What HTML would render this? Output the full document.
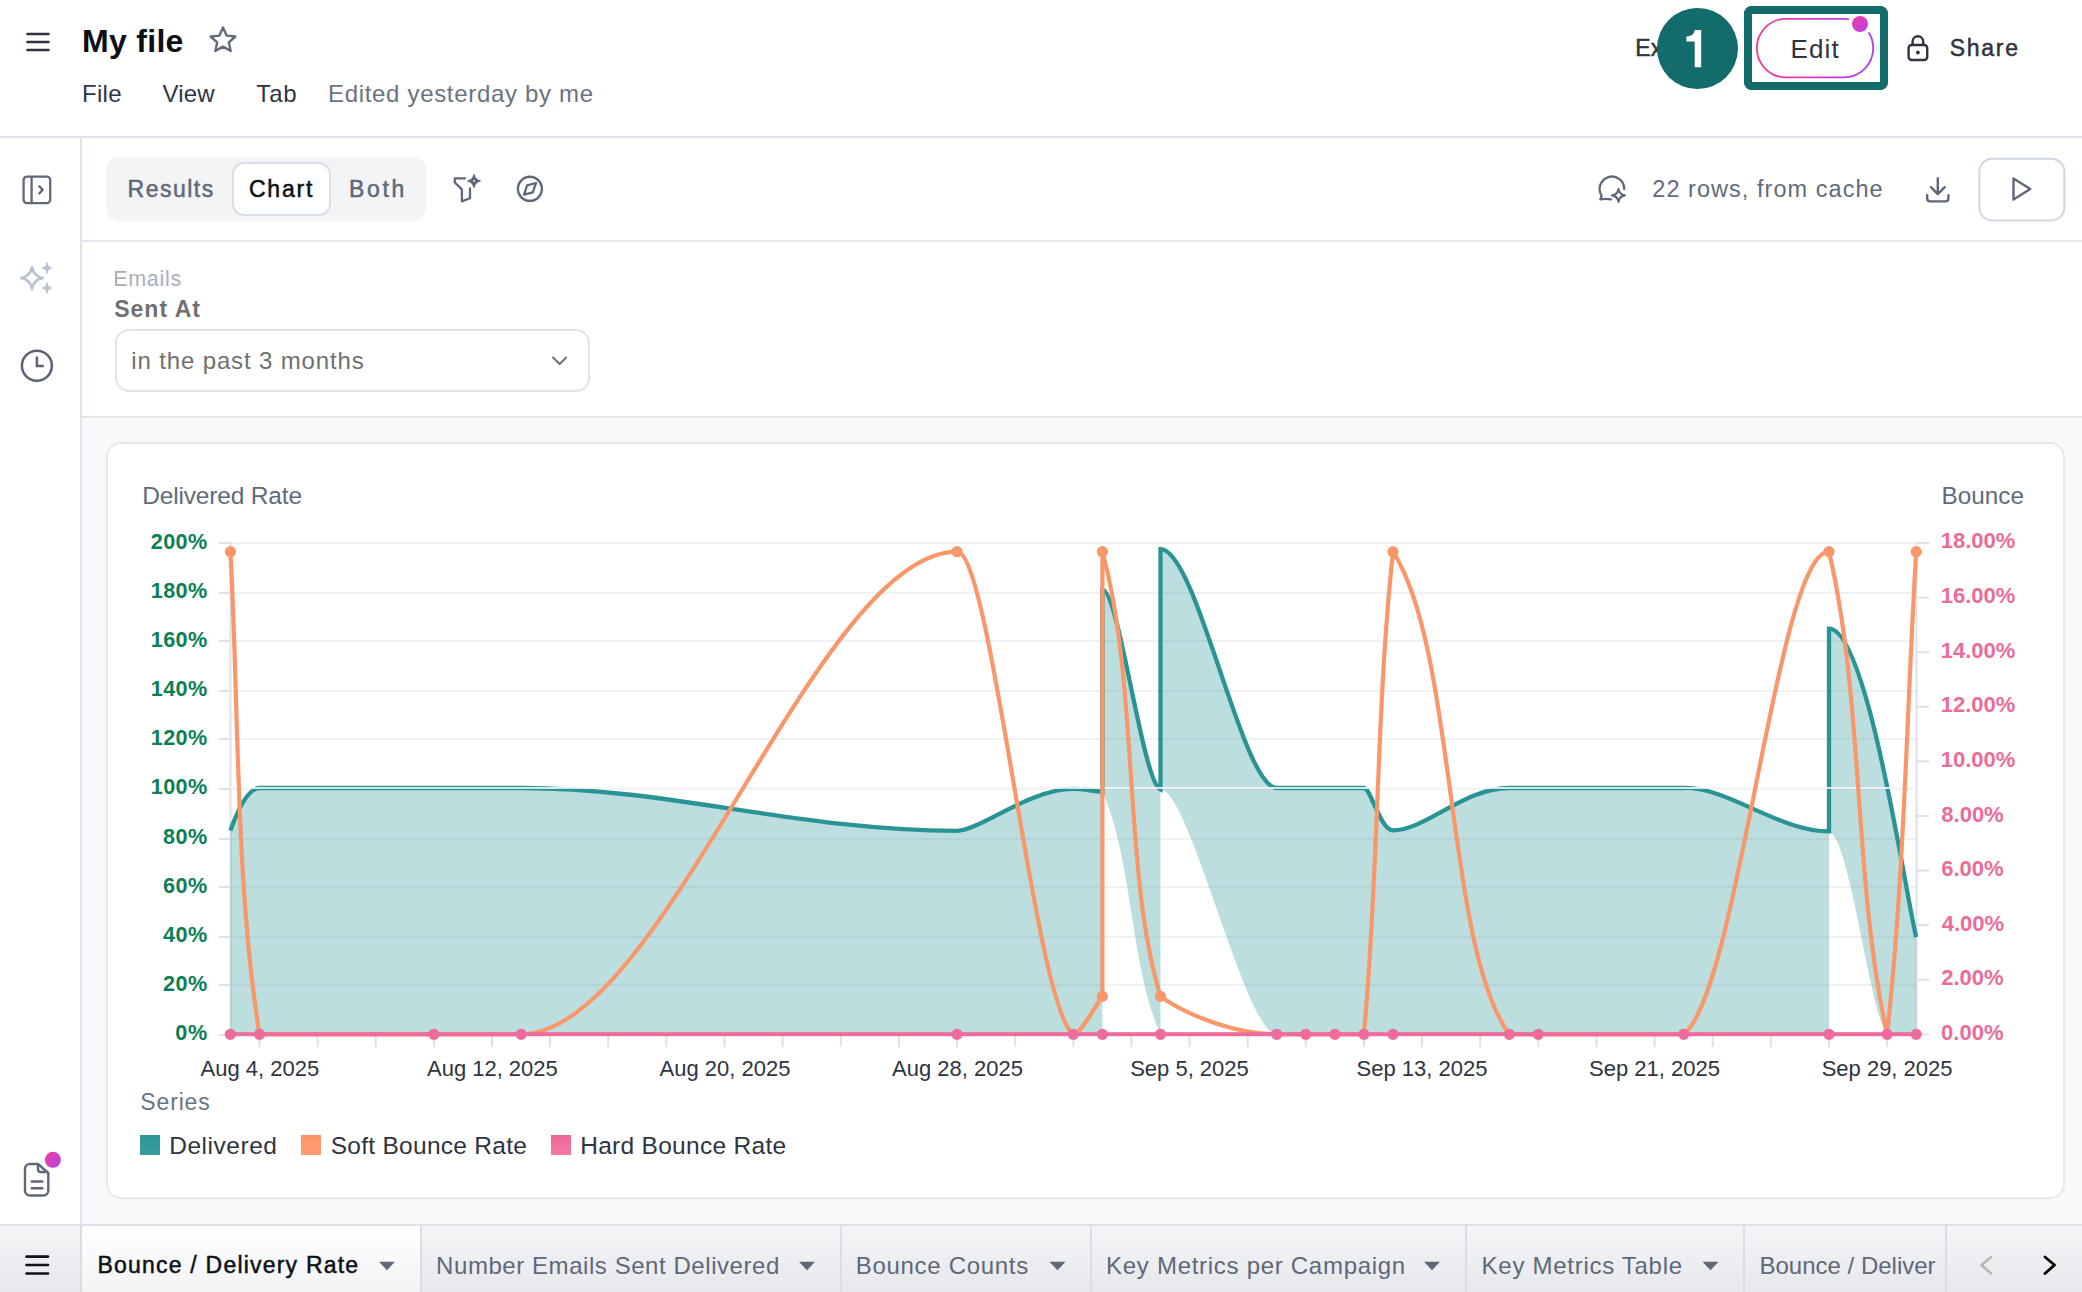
<!DOCTYPE html>
<html><head><meta charset="utf-8"><style>
html,body{margin:0;padding:0;width:2082px;height:1292px;overflow:hidden;background:#fff;}
body{position:relative;font-family:"Liberation Sans",sans-serif;}
.t{position:absolute;white-space:pre;line-height:1;}
.box{position:absolute;box-sizing:border-box;}
svg.box{overflow:visible}
</style></head><body>
<div class="box" style="left:0;top:136px;width:2082px;height:2px;background:#E0E4EB"></div>
<svg class="box" style="left:0;top:0" width="260" height="136"><g stroke="#2C3341" stroke-width="2.6" stroke-linecap="round"><line x1="27.5" y1="34" x2="48.5" y2="34"/><line x1="27.5" y1="42" x2="48.5" y2="42"/><line x1="27.5" y1="50" x2="48.5" y2="50"/></g><path d="M223,27.5 L226.6,35.6 L235.4,36.5 L228.8,42.4 L230.7,51 L223,46.6 L215.3,51 L217.2,42.4 L210.6,36.5 L219.4,35.6 Z" fill="none" stroke="#5F6B7D" stroke-width="2.4" stroke-linejoin="round"/></svg>
<div class="t" style="left:82.1px;top:24.9px;font-size:32.00px;color:#0B0E13;font-weight:700;letter-spacing:0.28px;">My file</div>
<div class="t" style="left:81.9px;top:82.4px;font-size:24.00px;color:#2E3646;letter-spacing:0.35px;">File</div>
<div class="t" style="left:162.4px;top:82.4px;font-size:24.00px;color:#2E3646;letter-spacing:0.24px;">View</div>
<div class="t" style="left:256.3px;top:82.4px;font-size:24.00px;color:#2E3646;letter-spacing:0.85px;">Tab</div>
<div class="t" style="left:328.0px;top:82.4px;font-size:24.00px;color:#6B7380;letter-spacing:0.68px;">Edited yesterday by me</div>
<div class="t" style="left:1635.3px;top:37.0px;font-size:23.00px;color:#2E3440;-webkit-text-stroke:0.50px #2E3440;">Ex</div>
<div class="box" style="left:1656.7px;top:7.6px;width:81px;height:81px;border-radius:50%;background:#136B6B"></div>
<svg class="box" style="left:1680px;top:26px" width="30" height="46"><path d="M21.2,4 V41.2 H14.7 V15.4 H6.4 V10.4 Q11.6,10.4 13.4,7.6 Q14.3,6 14.8,4 Z" fill="#fff"/></svg>
<div class="box" style="left:1744px;top:6px;width:144px;height:84px;border:8px solid #136B6B;border-radius:8px;background:#fff"></div>
<svg class="box" style="left:1744px;top:6px" width="144" height="84"><defs><linearGradient id="pg" x1="0" y1="0" x2="1" y2="0"><stop offset="0" stop-color="#F23B97"/><stop offset="1" stop-color="#B33CF2"/></linearGradient><linearGradient id="dg" x1="0" y1="0" x2="1" y2="1"><stop offset="0" stop-color="#F23F9B"/><stop offset="1" stop-color="#B441EE"/></linearGradient></defs><rect x="12.8" y="12.8" width="116.4" height="58.6" rx="29.3" fill="none" stroke="url(#pg)" stroke-width="1.8"/><circle cx="116" cy="18" r="12" fill="#fff"/><circle cx="116" cy="18" r="8" fill="url(#dg)"/></svg>
<div class="t" style="left:1790.5px;top:35.9px;font-size:26.00px;color:#2E3440;letter-spacing:1.16px;">Edit</div>
<div class="box" style="left:1744px;top:6px;width:144px;height:84px;border:8px solid #136B6B;border-radius:8px"></div>
<svg class="box" style="left:1900px;top:30px" width="36" height="36"><rect x="8.6" y="15" width="18.6" height="15" rx="3" fill="none" stroke="#2E3440" stroke-width="2.4"/><path d="M12.6,15 V11.5 a5.3,5.3 0 0 1 10.6,0 V15" fill="none" stroke="#2E3440" stroke-width="2.4"/><circle cx="17.9" cy="22.5" r="1.9" fill="#2E3440"/></svg>
<div class="t" style="left:1949.8px;top:37.0px;font-size:23.00px;color:#2E3440;-webkit-text-stroke:0.50px #2E3440;letter-spacing:1.69px;">Share</div>
<div class="box" style="left:80px;top:138px;width:2px;height:1154px;background:#DFE3EB"></div>
<svg class="box" style="left:0;top:138px" width="80" height="1154"><g fill="none" stroke="#5F6878" stroke-width="2.3"><rect x="23.6" y="38.6" width="26.6" height="26.6" rx="3.5"/><line x1="31.6" y1="38.6" x2="31.6" y2="65.2"/><polyline points="39.3,48.3 42.6,51.9 39.3,55.5" stroke-linecap="round" stroke-linejoin="round"/></g><path d="M32,128.8 Q33.5,138.5 43,140 Q33.5,141.5 32,151 Q30.5,141.5 21,140 Q30.5,138.5 32,128.8 Z" fill="none" stroke="#B9C2D2" stroke-width="2.3" stroke-linejoin="round"/><path d="M47,124.5 Q47.6,129.4 51.8,130 Q47.6,130.6 47,135.5 Q46.4,130.6 42.2,130 Q46.4,129.4 47,124.5 Z" fill="#B9C2D2" stroke="#B9C2D2" stroke-width="1" stroke-linejoin="round"/><path d="M47,144.5 Q47.6,149.4 51.8,150 Q47.6,150.6 47,155.5 Q46.4,150.6 42.2,150 Q46.4,149.4 47,144.5 Z" fill="#B9C2D2" stroke="#B9C2D2" stroke-width="1" stroke-linejoin="round"/><circle cx="36.9" cy="227.8" r="15" fill="none" stroke="#5A6476" stroke-width="2.5"/><polyline points="36.9,218.5 36.9,228 43.8,228" fill="none" stroke="#5A6476" stroke-width="2.5"/><path d="M29.5,1026 H38 L48.3,1035 V1052.5 a5,5 0 0 1 -5,5 H30 a5,5 0 0 1 -5,-5 V1031 a5,5 0 0 1 5,-5 Z" fill="none" stroke="#5F6878" stroke-width="2.4" stroke-linejoin="round"/><path d="M38,1026.5 V1031.5 a2.5,2.5 0 0 0 2.5,2.5 H48" fill="none" stroke="#5F6878" stroke-width="2.4"/><g stroke="#5F6878" stroke-width="2.4" stroke-linecap="round"><line x1="31.8" y1="1043.5" x2="42.3" y2="1043.5"/><line x1="31.8" y1="1050.2" x2="42.3" y2="1050.2"/></g><defs><linearGradient id="sg" x1="0" y1="0" x2="1" y2="1"><stop offset="0" stop-color="#F23F9B"/><stop offset="1" stop-color="#B441EE"/></linearGradient></defs><circle cx="52.9" cy="1021.8" r="8" fill="url(#sg)"/></svg>
<div class="box" style="left:82px;top:240px;width:2000px;height:2px;background:#E2E5EC"></div>
<div class="box" style="left:106px;top:157px;width:320px;height:64px;border-radius:13px;background:#F3F4F6"></div>
<div class="box" style="left:231.5px;top:161.5px;width:99px;height:54.5px;border:2px solid #D9DFE8;border-radius:12px;background:#fff"></div>
<div class="t" style="left:127.6px;top:178.0px;font-size:23.00px;color:#5F6878;-webkit-text-stroke:0.50px #5F6878;letter-spacing:1.49px;">Results</div>
<div class="t" style="left:249.0px;top:178.0px;font-size:23.00px;color:#0B0F14;-webkit-text-stroke:0.50px #0B0F14;letter-spacing:1.76px;">Chart</div>
<div class="t" style="left:349.0px;top:178.0px;font-size:23.00px;color:#5F6878;-webkit-text-stroke:0.50px #5F6878;letter-spacing:2.69px;">Both</div>
<svg class="box" style="left:440px;top:160px" width="120" height="60"><path d="M25,18.3 H14.8 V22.5 L21.9,29.4 V41.4 L30,38.3 V28.5" fill="none" stroke="#5F6878" stroke-width="2.3" stroke-linejoin="round" stroke-linecap="round"/><path d="M34,14.6 Q35.1,19.9 40.4,21 Q35.1,22.1 34,27.4 Q32.9,22.1 27.6,21 Q32.9,19.9 34,14.6 Z" fill="#5F6878" stroke="#5F6878" stroke-width="1.2" stroke-linejoin="round"/><rect x="33.2" y="20.2" width="1.6" height="1.6" fill="#fff"/><circle cx="89.9" cy="28.8" r="12" fill="none" stroke="#5F6878" stroke-width="2.4"/><path d="M96,23 L92.8,32.3 L84.1,34.6 L87.1,25.4 Z" fill="none" stroke="#5F6878" stroke-width="2.3" stroke-linejoin="round"/></svg>
<svg class="box" style="left:1590px;top:160px" width="480" height="60"><path d="M34.2,29.2 A12.3,12.3 0 1 0 11.6,35.6 L10.4,39.4 Q15,38.2 21,39.4" fill="none" stroke="#5F6878" stroke-width="2.3" stroke-linejoin="round" stroke-linecap="round"/><path d="M28.5,29 Q29.4,34.5 34.9,35.4 Q29.4,36.3 28.5,41.8 Q27.6,36.3 22.1,35.4 Q27.6,34.5 28.5,29 Z" fill="none" stroke="#5F6878" stroke-width="2.1" stroke-linejoin="round"/><path d="M347.8,18.3 V34 M340.9,27.2 L347.8,34.2 L354.7,27.2 M337.2,35.2 V38.6 a2.8,2.8 0 0 0 2.8,2.8 H355.6 a2.8,2.8 0 0 0 2.8,-2.8 V35.2" fill="none" stroke="#5F6878" stroke-width="2.4" stroke-linecap="round" stroke-linejoin="round"/><rect x="389.4" y="-1.3" width="85" height="61.7" rx="13" fill="none" stroke="#D0D7E2" stroke-width="2"/><path d="M423.5,18.5 L440.3,29 L423.5,39.5 Z" fill="none" stroke="#5F6878" stroke-width="2.4" stroke-linejoin="round"/></svg>
<div class="t" style="left:1652.3px;top:177.8px;font-size:23.50px;color:#5F6B7B;letter-spacing:1.04px;">22 rows, from cache</div>
<div class="t" style="left:113.2px;top:268.7px;font-size:21.50px;color:#A8AFBB;letter-spacing:0.71px;">Emails</div>
<div class="t" style="left:114.2px;top:297.7px;font-size:23.00px;color:#707070;font-weight:700;letter-spacing:1.02px;">Sent At</div>
<div class="box" style="left:114.5px;top:328.5px;width:475px;height:63px;border:2px solid #E3E4EA;border-radius:14px;background:#fff"></div>
<div class="t" style="left:131.3px;top:349.0px;font-size:24.00px;color:#707070;letter-spacing:0.86px;">in the past 3 months</div>
<svg class="box" style="left:545px;top:350px" width="30" height="20"><polyline points="8,7.5 14.6,14 21.2,7.5" fill="none" stroke="#707070" stroke-width="2" stroke-linecap="round" stroke-linejoin="round"/></svg>
<div class="box" style="left:82px;top:416px;width:2000px;height:2px;background:#E6E7EE"></div>
<div class="box" style="left:82px;top:418px;width:2000px;height:806px;background:#F9F9FA"></div>
<div class="box" style="left:106px;top:442px;width:1959px;height:757px;border:2px solid #E7E8EF;border-radius:15px;background:#fff"></div>
<div class="t" style="left:142.2px;top:484.2px;font-size:24.50px;color:#5F6B7B;letter-spacing:-0.17px;">Delivered Rate</div>
<div class="t" style="left:1941.5px;top:484.2px;font-size:24.30px;color:#5F6B7B;letter-spacing:0.01px;">Bounce</div>
<div class="t" style="left:150.8px;top:530.7px;font-size:21.60px;color:#0B7F57;font-weight:700;letter-spacing:0.35px;">200%</div>
<div class="t" style="left:150.8px;top:579.8px;font-size:21.60px;color:#0B7F57;font-weight:700;letter-spacing:0.35px;">180%</div>
<div class="t" style="left:150.8px;top:629.0px;font-size:21.60px;color:#0B7F57;font-weight:700;letter-spacing:0.35px;">160%</div>
<div class="t" style="left:150.8px;top:678.1px;font-size:21.60px;color:#0B7F57;font-weight:700;letter-spacing:0.35px;">140%</div>
<div class="t" style="left:150.8px;top:727.2px;font-size:21.60px;color:#0B7F57;font-weight:700;letter-spacing:0.35px;">120%</div>
<div class="t" style="left:150.8px;top:776.4px;font-size:21.60px;color:#0B7F57;font-weight:700;letter-spacing:0.35px;">100%</div>
<div class="t" style="left:163.1px;top:825.5px;font-size:21.60px;color:#0B7F57;font-weight:700;letter-spacing:0.41px;">80%</div>
<div class="t" style="left:163.1px;top:874.6px;font-size:21.60px;color:#0B7F57;font-weight:700;letter-spacing:0.41px;">60%</div>
<div class="t" style="left:163.1px;top:923.8px;font-size:21.60px;color:#0B7F57;font-weight:700;letter-spacing:0.41px;">40%</div>
<div class="t" style="left:163.1px;top:972.9px;font-size:21.60px;color:#0B7F57;font-weight:700;letter-spacing:0.41px;">20%</div>
<div class="t" style="left:175.3px;top:1022.0px;font-size:21.60px;color:#0B7F57;font-weight:700;letter-spacing:0.58px;">0%</div>
<div class="t" style="left:1940.7px;top:530.4px;font-size:22.00px;color:#EC6C98;font-weight:700;">18.00%</div>
<div class="t" style="left:1940.7px;top:585.0px;font-size:22.00px;color:#EC6C98;font-weight:700;">16.00%</div>
<div class="t" style="left:1940.7px;top:639.6px;font-size:22.00px;color:#EC6C98;font-weight:700;">14.00%</div>
<div class="t" style="left:1940.7px;top:694.3px;font-size:22.00px;color:#EC6C98;font-weight:700;">12.00%</div>
<div class="t" style="left:1940.7px;top:748.9px;font-size:22.00px;color:#EC6C98;font-weight:700;">10.00%</div>
<div class="t" style="left:1941.3px;top:803.5px;font-size:22.00px;color:#EC6C98;font-weight:700;">8.00%</div>
<div class="t" style="left:1941.2px;top:858.2px;font-size:22.00px;color:#EC6C98;font-weight:700;">6.00%</div>
<div class="t" style="left:1941.7px;top:912.8px;font-size:22.00px;color:#EC6C98;font-weight:700;">4.00%</div>
<div class="t" style="left:1941.2px;top:967.4px;font-size:22.00px;color:#EC6C98;font-weight:700;">2.00%</div>
<div class="t" style="left:1941.1px;top:1022.0px;font-size:22.00px;color:#EC6C98;font-weight:700;">0.00%</div>
<div class="t" style="left:200.6px;top:1058.4px;font-size:22.00px;color:#2E3440;letter-spacing:-0.01px;">Aug 4, 2025</div>
<div class="t" style="left:427.0px;top:1058.4px;font-size:22.00px;color:#2E3440;letter-spacing:-0.01px;">Aug 12, 2025</div>
<div class="t" style="left:659.6px;top:1058.4px;font-size:22.00px;color:#2E3440;letter-spacing:-0.01px;">Aug 20, 2025</div>
<div class="t" style="left:892.1px;top:1058.4px;font-size:22.00px;color:#2E3440;letter-spacing:-0.01px;">Aug 28, 2025</div>
<div class="t" style="left:1130.2px;top:1058.4px;font-size:22.00px;color:#2E3440;letter-spacing:-0.01px;">Sep 5, 2025</div>
<div class="t" style="left:1356.6px;top:1058.4px;font-size:22.00px;color:#2E3440;letter-spacing:-0.01px;">Sep 13, 2025</div>
<div class="t" style="left:1589.1px;top:1058.4px;font-size:22.00px;color:#2E3440;letter-spacing:-0.01px;">Sep 21, 2025</div>
<div class="t" style="left:1821.7px;top:1058.4px;font-size:22.00px;color:#2E3440;letter-spacing:-0.01px;">Sep 29, 2025</div>
<svg class="box" style="left:0;top:0" width="2082" height="1292"><rect x="230.5" y="542.0" width="1686" height="2" fill="#F0F1F5"/>
<rect x="219" y="542.0" width="12" height="2" fill="#DDE1E8"/>
<rect x="230.5" y="592.0" width="1686" height="2" fill="#F0F1F5"/>
<rect x="219" y="592.0" width="12" height="2" fill="#DDE1E8"/>
<rect x="230.5" y="640.0" width="1686" height="2" fill="#F0F1F5"/>
<rect x="219" y="640.0" width="12" height="2" fill="#DDE1E8"/>
<rect x="230.5" y="690.0" width="1686" height="2" fill="#F0F1F5"/>
<rect x="219" y="690.0" width="12" height="2" fill="#DDE1E8"/>
<rect x="230.5" y="738.0" width="1686" height="2" fill="#F0F1F5"/>
<rect x="219" y="738.0" width="12" height="2" fill="#DDE1E8"/>
<rect x="230.5" y="788.0" width="1686" height="2" fill="#F0F1F5"/>
<rect x="219" y="788.0" width="12" height="2" fill="#DDE1E8"/>
<rect x="230.5" y="838.0" width="1686" height="2" fill="#F0F1F5"/>
<rect x="219" y="838.0" width="12" height="2" fill="#DDE1E8"/>
<rect x="230.5" y="886.0" width="1686" height="2" fill="#F0F1F5"/>
<rect x="219" y="886.0" width="12" height="2" fill="#DDE1E8"/>
<rect x="230.5" y="936.0" width="1686" height="2" fill="#F0F1F5"/>
<rect x="219" y="936.0" width="12" height="2" fill="#DDE1E8"/>
<rect x="230.5" y="984.0" width="1686" height="2" fill="#F0F1F5"/>
<rect x="219" y="984.0" width="12" height="2" fill="#DDE1E8"/>
<rect x="230.5" y="1034.0" width="1686" height="2" fill="#F0F1F5"/>
<rect x="219" y="1034.0" width="12" height="2" fill="#DDE1E8"/>
<rect x="1916" y="542.0" width="13" height="2" fill="#DDE1E8"/>
<rect x="1916" y="596.6" width="13" height="2" fill="#DDE1E8"/>
<rect x="1916" y="651.2" width="13" height="2" fill="#DDE1E8"/>
<rect x="1916" y="705.8" width="13" height="2" fill="#DDE1E8"/>
<rect x="1916" y="760.4" width="13" height="2" fill="#DDE1E8"/>
<rect x="1916" y="815.0" width="13" height="2" fill="#DDE1E8"/>
<rect x="1916" y="869.5" width="13" height="2" fill="#DDE1E8"/>
<rect x="1916" y="924.1" width="13" height="2" fill="#DDE1E8"/>
<rect x="1916" y="978.7" width="13" height="2" fill="#DDE1E8"/>
<rect x="1916" y="1033.3" width="13" height="2" fill="#DDE1E8"/>
<rect x="229.5" y="541.8" width="2" height="493" fill="#DDE1E8"/>
<rect x="1915.5" y="541.8" width="2" height="493" fill="#DDE1E8"/>
<rect x="258.5" y="1036" width="2" height="11" fill="#DDE1E8"/>
<rect x="316.6" y="1036" width="2" height="11" fill="#DDE1E8"/>
<rect x="374.7" y="1036" width="2" height="11" fill="#DDE1E8"/>
<rect x="432.9" y="1036" width="2" height="11" fill="#DDE1E8"/>
<rect x="491.0" y="1036" width="2" height="11" fill="#DDE1E8"/>
<rect x="549.1" y="1036" width="2" height="11" fill="#DDE1E8"/>
<rect x="607.2" y="1036" width="2" height="11" fill="#DDE1E8"/>
<rect x="665.4" y="1036" width="2" height="11" fill="#DDE1E8"/>
<rect x="723.5" y="1036" width="2" height="11" fill="#DDE1E8"/>
<rect x="781.6" y="1036" width="2" height="11" fill="#DDE1E8"/>
<rect x="839.8" y="1036" width="2" height="11" fill="#DDE1E8"/>
<rect x="897.9" y="1036" width="2" height="11" fill="#DDE1E8"/>
<rect x="956.0" y="1036" width="2" height="11" fill="#DDE1E8"/>
<rect x="1014.2" y="1036" width="2" height="11" fill="#DDE1E8"/>
<rect x="1072.3" y="1036" width="2" height="11" fill="#DDE1E8"/>
<rect x="1130.4" y="1036" width="2" height="11" fill="#DDE1E8"/>
<rect x="1188.5" y="1036" width="2" height="11" fill="#DDE1E8"/>
<rect x="1246.7" y="1036" width="2" height="11" fill="#DDE1E8"/>
<rect x="1304.8" y="1036" width="2" height="11" fill="#DDE1E8"/>
<rect x="1362.9" y="1036" width="2" height="11" fill="#DDE1E8"/>
<rect x="1421.1" y="1036" width="2" height="11" fill="#DDE1E8"/>
<rect x="1479.2" y="1036" width="2" height="11" fill="#DDE1E8"/>
<rect x="1537.3" y="1036" width="2" height="11" fill="#DDE1E8"/>
<rect x="1595.5" y="1036" width="2" height="11" fill="#DDE1E8"/>
<rect x="1653.6" y="1036" width="2" height="11" fill="#DDE1E8"/>
<rect x="1711.7" y="1036" width="2" height="11" fill="#DDE1E8"/>
<rect x="1769.8" y="1036" width="2" height="11" fill="#DDE1E8"/>
<rect x="1828.0" y="1036" width="2" height="11" fill="#DDE1E8"/>
<rect x="1886.1" y="1036" width="2" height="11" fill="#DDE1E8"/>
<path d="M230.4,1034.3 L230.4,830.5 C236,815 247,788 259.5,788 L521.1,788 C669.5,788 799,830.8 957,830.8 C979.4,830.8 1029.4,788.9 1073.3,788.9 C1085,788.9 1092,791.3 1102.4,791.5 L1102.4,589.6 C1118.9,589.6 1142.6,782.6 1160.5,789.5 L1160.5,549.1 C1197,549.1 1242,788 1276.7,788 L1363.9,788 C1370.7,788 1380.5,830.3 1393,830.3 C1425.9,830.3 1463.9,788 1509.3,788 L1683.7,788 C1727.8,786.7 1778.5,831.4 1829,831.4 L1829,628.7 C1867.9,628.7 1906.4,900 1916.2,937.1 L1916.2,1034.3 Z M1102.4,791.5 C1132.8,859.4 1130.1,966.7 1160.5,1034.3 L1102.4,1034.3 Z M1160.5,789.5 C1189.9,789.5 1245.4,1034.3 1276.7,1034.3 L1160.5,1034.3 Z M1829,832.4 C1848.9,832.4 1870.1,1013.3 1887.1,1034.3 L1829,1034.3 Z" fill="#2A9494" fill-opacity="0.31" fill-rule="evenodd"/>
<path d="M230.4,830.5 C236,815 247,788 259.5,788 L521.1,788 C669.5,788 799,830.8 957,830.8 C979.4,830.8 1029.4,788.9 1073.3,788.9 C1085,788.9 1092,791.3 1102.4,791.5 L1102.4,589.6 C1118.9,589.6 1142.6,782.6 1160.5,789.5 L1160.5,549.1 C1197,549.1 1242,788 1276.7,788 L1363.9,788 C1370.7,788 1380.5,830.3 1393,830.3 C1425.9,830.3 1463.9,788 1509.3,788 L1683.7,788 C1727.8,786.7 1778.5,831.4 1829,831.4 L1829,628.7 C1867.9,628.7 1906.4,900 1916.2,937.1" fill="none" stroke="#2A9393" stroke-width="4.3" stroke-linejoin="miter" stroke-miterlimit="10"/>
<rect x="230.5" y="787.1" width="1686" height="1.7" fill="#F7F5F7"/>
<path d="M230.4,551.7 C239,706 235.2,884.1 259.5,1034.3 L521.1,1034.3 C664.7,1034.3 816.2,551.7 957,551.7 C991.5,551.7 1034.5,1006.6 1073.3,1034.3 C1080,1034.3 1090,1015 1102.4,996.2 L1102.4,551.7 C1139,685.7 1123,874.8 1160.5,996.4 C1190.3,1017.9 1240.5,1034.3 1276.7,1034.3 L1363.9,1034.3 C1378.9,875.8 1375.9,708.9 1393,551.7 C1457,652.4 1445,945.2 1509.3,1034.3 L1683.7,1034.3 C1738.8,991.2 1777,551.7 1829,551.7 C1864,700.5 1853.3,883.2 1887.1,1034.3 C1904.5,875.6 1906.6,711.1 1916.2,551.7" fill="none" stroke="#F9976A" stroke-width="4.2" stroke-linejoin="round"/>
<circle cx="230.4" cy="551.7" r="5.6" fill="#F9976A"/>
<circle cx="957.0" cy="551.7" r="5.6" fill="#F9976A"/>
<circle cx="1102.4" cy="551.7" r="5.6" fill="#F9976A"/>
<circle cx="1102.4" cy="996.4" r="5.6" fill="#F9976A"/>
<circle cx="1160.5" cy="996.4" r="5.6" fill="#F9976A"/>
<circle cx="1393.0" cy="551.7" r="5.6" fill="#F9976A"/>
<circle cx="1829.0" cy="551.7" r="5.6" fill="#F9976A"/>
<circle cx="1916.2" cy="551.7" r="5.6" fill="#F9976A"/>
<rect x="230.4" y="1032.2" width="1685.8" height="4" fill="#EE6B9B"/>
<circle cx="230.4" cy="1034.3" r="5.6" fill="#EE6B9B"/>
<circle cx="259.5" cy="1034.3" r="5.6" fill="#EE6B9B"/>
<circle cx="433.9" cy="1034.3" r="5.6" fill="#EE6B9B"/>
<circle cx="521.1" cy="1034.3" r="5.6" fill="#EE6B9B"/>
<circle cx="957.0" cy="1034.3" r="5.6" fill="#EE6B9B"/>
<circle cx="1073.3" cy="1034.3" r="5.6" fill="#EE6B9B"/>
<circle cx="1102.4" cy="1034.3" r="5.6" fill="#EE6B9B"/>
<circle cx="1160.5" cy="1034.3" r="5.6" fill="#EE6B9B"/>
<circle cx="1276.7" cy="1034.3" r="5.6" fill="#EE6B9B"/>
<circle cx="1305.8" cy="1034.3" r="5.6" fill="#EE6B9B"/>
<circle cx="1334.9" cy="1034.3" r="5.6" fill="#EE6B9B"/>
<circle cx="1363.9" cy="1034.3" r="5.6" fill="#EE6B9B"/>
<circle cx="1393.0" cy="1034.3" r="5.6" fill="#EE6B9B"/>
<circle cx="1509.3" cy="1034.3" r="5.6" fill="#EE6B9B"/>
<circle cx="1538.3" cy="1034.3" r="5.6" fill="#EE6B9B"/>
<circle cx="1683.7" cy="1034.3" r="5.6" fill="#EE6B9B"/>
<circle cx="1829.0" cy="1034.3" r="5.6" fill="#EE6B9B"/>
<circle cx="1887.1" cy="1034.3" r="5.6" fill="#EE6B9B"/>
<circle cx="1916.2" cy="1034.3" r="5.6" fill="#EE6B9B"/></svg>
<div class="t" style="left:140.3px;top:1091.0px;font-size:23.00px;color:#6B7385;letter-spacing:0.85px;">Series</div>
<div class="box" style="left:140px;top:1135px;width:20px;height:20px;background:linear-gradient(#2A9696,#3A9D9D)"></div>
<div class="t" style="left:169.2px;top:1133.9px;font-size:24.50px;color:#2E3440;letter-spacing:0.54px;">Delivered</div>
<div class="box" style="left:301px;top:1135px;width:20px;height:20px;background:linear-gradient(#FF9464,#FF9D76)"></div>
<div class="t" style="left:330.7px;top:1133.9px;font-size:24.50px;color:#2E3440;letter-spacing:0.28px;">Soft Bounce Rate</div>
<div class="box" style="left:551px;top:1135px;width:20px;height:20px;background:linear-gradient(#EE6699,#F27BA6)"></div>
<div class="t" style="left:580.2px;top:1133.9px;font-size:24.50px;color:#2E3440;letter-spacing:0.29px;">Hard Bounce Rate</div>
<div class="box" style="left:0;top:1224px;width:2082px;height:68px;background:linear-gradient(#F4F5F7,#E6E8EC)"></div>
<div class="box" style="left:0;top:1224px;width:2082px;height:2px;background:#DDE0E8"></div>
<div class="box" style="left:82px;top:1226px;width:338px;height:66px;background:linear-gradient(#FFFFFF,#F2F3F5)"></div>
<div class="box" style="left:80.0px;top:1226px;width:2px;height:66px;background:#D9DDE5"></div>
<div class="box" style="left:419.5px;top:1226px;width:2px;height:66px;background:#D9DDE5"></div>
<div class="box" style="left:840.0px;top:1226px;width:2px;height:66px;background:#D9DDE5"></div>
<div class="box" style="left:1089.5px;top:1226px;width:2px;height:66px;background:#D9DDE5"></div>
<div class="box" style="left:1464.6px;top:1226px;width:2px;height:66px;background:#D9DDE5"></div>
<div class="box" style="left:1742.5px;top:1226px;width:2px;height:66px;background:#D9DDE5"></div>
<div class="box" style="left:1944.5px;top:1226px;width:2px;height:66px;background:#D9DDE5"></div>
<svg class="box" style="left:0;top:1226px" width="2082" height="66"><g stroke="#111318" stroke-width="2.6" stroke-linecap="round"><line x1="26.5" y1="30.6" x2="48" y2="30.6"/><line x1="26.5" y1="39" x2="48" y2="39"/><line x1="26.5" y1="47.5" x2="48" y2="47.5"/></g><path d="M379.0,35.8 h16 l-8,8.5 Z" fill="#5F6878"/><path d="M799.0,35.8 h16 l-8,8.5 Z" fill="#5F6878"/><path d="M1049.5,35.8 h16 l-8,8.5 Z" fill="#5F6878"/><path d="M1424.0,35.8 h16 l-8,8.5 Z" fill="#5F6878"/><path d="M1702.5,35.8 h16 l-8,8.5 Z" fill="#5F6878"/><polyline points="1991,31 1981.5,39 1991,47.5" fill="none" stroke="#B5B5B5" stroke-width="2.4" stroke-linecap="round" stroke-linejoin="round"/><polyline points="2045,31 2054.5,39 2045,47.5" fill="none" stroke="#000" stroke-width="2.8" stroke-linecap="round" stroke-linejoin="round"/></svg>
<div class="t" style="left:97.5px;top:1254.4px;font-size:23.00px;color:#0D1117;-webkit-text-stroke:0.50px #0D1117;letter-spacing:1.21px;">Bounce / Delivery Rate</div>
<div class="t" style="left:436.1px;top:1253.7px;font-size:24.00px;color:#5F6878;letter-spacing:0.56px;">Number Emails Sent Delivered</div>
<div class="t" style="left:855.7px;top:1253.7px;font-size:24.00px;color:#5F6878;letter-spacing:0.70px;">Bounce Counts</div>
<div class="t" style="left:1106.1px;top:1253.7px;font-size:24.00px;color:#5F6878;letter-spacing:0.71px;">Key Metrics per Campaign</div>
<div class="t" style="left:1481.6px;top:1253.7px;font-size:24.00px;color:#5F6878;letter-spacing:0.72px;">Key Metrics Table</div>
<div class="box" style="left:1744.5px;top:1226px;width:200px;height:66px;overflow:hidden"><div class="t" style="left:15.0px;top:27.7px;font-size:24.00px;color:#5F6878;">Bounce / Deliver</div></div>
</body></html>
